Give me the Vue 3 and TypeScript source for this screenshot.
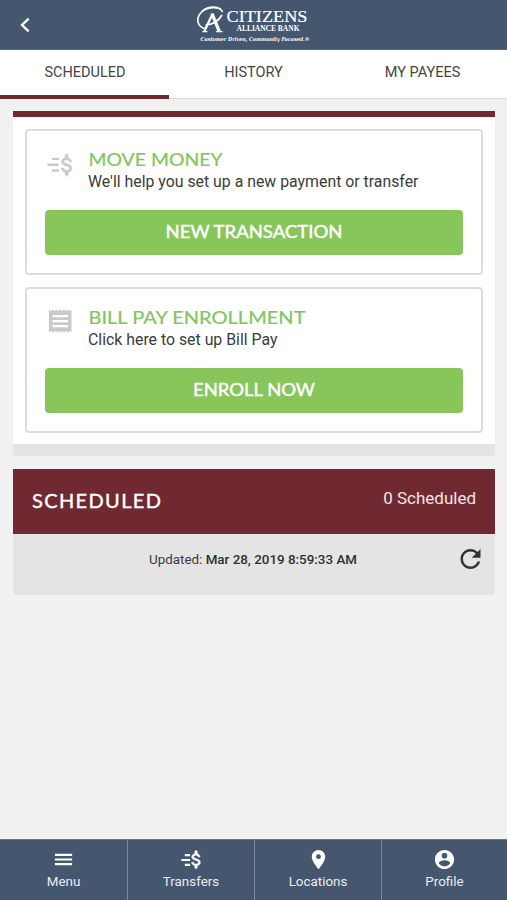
<script setup lang="ts">
interface ActionCard { icon: 'money' | 'receipt'; title: string; titleWidth: number; text: string; button: string; buttonWidth: number }

const tabs: string[] = ['SCHEDULED', 'HISTORY', 'MY PAYEES']
const navItems: string[] = ['Menu', 'Transfers', 'Locations', 'Profile']
const cards: ActionCard[] = [
  { icon: 'money', title: 'MOVE MONEY', titleWidth: 134, text: "We'll help you set up a new payment or transfer", button: 'NEW TRANSACTION', buttonWidth: 177 },
  { icon: 'receipt', title: 'BILL PAY ENROLLMENT', titleWidth: 217, text: 'Click here to set up Bill Pay', button: 'ENROLL NOW', buttonWidth: 122 },
]
const dollar = 'M11.8 10.9c-2.27-.59-3-1.2-3-2.15 0-1.09 1.01-1.85 2.7-1.85 1.78 0 2.44.85 2.5 2.1h2.21c-.07-1.72-1.12-3.3-3.21-3.81V3L11.5 1 10 3v2.16c-1.94.42-3.5 1.68-3.5 3.61 0 2.31 1.91 3.46 4.7 4.13 2.5.6 3 1.48 3 2.41 0 .69-.49 1.79-2.7 1.79-2.06 0-2.87-.92-2.98-2.1h-2.2c.12 2.19 1.76 3.42 3.68 3.83V21l1.5 2 1.5-2v-2.15c1.95-.37 3.5-1.5 3.5-3.55 0-2.84-2.43-3.81-4.7-4.4z'
</script>

<template>
  <div class="screen">
    <header class="topbar">
      <svg class="back" viewBox="0 0 12 16"><path d="M9.700 1.700 3 8l6.700 6.300" /></svg>
      <svg class="logo" viewBox="0 0 118 42">
        <g fill="none" stroke="#fff">
          <path d="M26.500 8C24 2 13 1.500 6.500 7-.5 13.500.5 22 8.500 24.500" stroke-width="1.700" />
          <path d="M2.300 13C5 6.500 14 1.800 25 5" stroke-width=".9" />
          <path d="M8.200 27.500 16.500 10" stroke-width="2.300" />
          <path d="M16 9.500 23.300 27.500" stroke-width="3.300" />
          <path d="M9.500 21c7.500-.5 13-4 16.500-10" stroke-width="1.700" />
          <path d="M6.500 27.600h5M20 27.600h6.500" stroke-width="1.100" />
        </g>
        <text class="logo-main" x="30.500" y="17.800" textLength="81" lengthAdjust="spacingAndGlyphs">CITIZENS</text>
        <text class="logo-sub" x="40.500" y="27.200" textLength="63" lengthAdjust="spacingAndGlyphs">ALLIANCE BANK</text>
        <text class="logo-tag" x="4.500" y="36.800" textLength="109" lengthAdjust="spacingAndGlyphs">Customer Driven, Community Focused.®</text>
      </svg>
    </header>

    <nav class="tabs">
      <div v-for="(tab, i) in tabs" :key="tab" class="tab" :class="{ active: i === 0 }">{{ tab }}</div>
    </nav>

    <main>
      <section class="actions">
        <article v-for="card in cards" :key="card.title" class="card">
          <div class="card-head">
            <svg v-if="card.icon === 'money'" class="card-icon" viewBox="0 0 30 30">
              <g class="bold" transform="translate(9.700 2.500) scale(1.040)"><path :d="dollar" /></g>
              <path d="M7 7.700h7v2.400H7zM2.500 13.500h11v2.400h-11zM7 19.300h7v2.400H7z" />
            </svg>
            <svg v-else class="card-icon receipt" viewBox="0 0 30 30">
              <path fill-rule="evenodd" d="M4 3.500 5.900 5 7.800 3.500 9.700 5l1.900-1.500L13.500 5l1.900-1.500L17.300 5l1.900-1.500L21.100 5 23 3.500 24.900 5 26.500 3.500v23L24.900 25 23 26.500 21.100 25l-1.900 1.500-1.900-1.500-1.900 1.500-1.900-1.500-1.900 1.500L9.700 25l-1.900 1.500L5.900 25 4 26.500zM7.500 9v2.200h15.500V9zm0 5v2.200h15.500V14zm0 5v2.200h15.500V19z" />
            </svg>
            <div class="card-copy">
              <svg class="card-title" viewBox="0 0 330 22">
                <text x=".5" y="17.500" :textLength="card.titleWidth" lengthAdjust="spacingAndGlyphs">{{ card.title }}</text>
              </svg>
              <p>{{ card.text }}</p>
            </div>
          </div>
          <button type="button">
            <svg class="button-label" viewBox="0 0 418 45">
              <text :x="209 - card.buttonWidth / 2" y="28" :textLength="card.buttonWidth" lengthAdjust="spacingAndGlyphs">{{ card.button }}</text>
            </svg>
          </button>
        </article>
      </section>

      <section class="scheduled">
        <div class="scheduled-head">
          <svg class="scheduled-title" viewBox="0 0 140 30">
            <text x="0" y="22.300" textLength="129" lengthAdjust="spacing">SCHEDULED</text>
          </svg>
          <span class="count">0 Scheduled</span>
        </div>
        <div class="updated">
          <p>Updated: <b>Mar 28, 2019 8:59:33 AM</b></p>
          <svg class="refresh" viewBox="4 4 16 16"><path d="M17.650 6.350C16.200 4.900 14.210 4 12 4c-4.420 0-7.990 3.580-7.990 8s3.570 8 7.990 8c3.730 0 6.840-2.550 7.730-6h-2.080c-.82 2.330-3.040 4-5.650 4-3.310 0-6-2.690-6-6s2.690-6 6-6c1.660 0 3.140.69 4.220 1.780L13 11h7V4z" /></svg>
        </div>
      </section>
    </main>

    <footer class="bottom-nav">
      <div v-for="item in navItems" :key="item" class="nav-item">
        <svg v-if="item === 'Menu'" viewBox="0 0 24 24"><path d="M3 18h18v-2.300H3zm0-4.850h18v-2.300H3zM3 6v2.300h18V6z" /></svg>
        <svg v-else-if="item === 'Transfers'" viewBox="0 0 24 24">
          <g class="bold" transform="translate(6.400 1.300) scale(.9)"><path :d="dollar" /></g>
          <path d="M5 6.300h5.500v2.200H5zM1.500 11.400h9v2.200h-9zM5 16.500h5.500v2.200H5z" />
        </svg>
        <svg v-else-if="item === 'Locations'" viewBox="0 0 24 24"><path d="M12 2C8.130 2 5 5.130 5 9c0 5.250 7 13 7 13s7-7.750 7-13c0-3.870-3.130-7-7-7zm0 9.500A2.500 2.500 0 1 1 12 6.500a2.500 2.500 0 0 1 0 5z" /></svg>
        <svg v-else viewBox="0 0 24 24"><path d="M12 2C6.480 2 2 6.480 2 12s4.480 10 10 10 10-4.480 10-10S17.520 2 12 2zm0 3c1.660 0 3 1.340 3 3s-1.340 3-3 3-3-1.340-3-3 1.340-3 3-3zm0 14.200c-2.500 0-4.710-1.280-6-3.220.03-1.990 4-3.080 6-3.080 1.990 0 5.970 1.090 6 3.080-1.290 1.940-3.500 3.220-6 3.220z" /></svg>
        <span>{{ item }}</span>
      </div>
    </footer>
  </div>
</template>

<style>
body { margin: 0; background: #f1f1f1; }
</style>

<style scoped>
* { box-sizing: border-box; }
p { margin: 0; }
.screen { height: 900px; display: flex; flex-direction: column; background: #f1f1f1; color: #3b3b3b; font-family: Roboto, sans-serif; overflow: hidden; }
.topbar { height: 50px; flex: none; display: flex; align-items: flex-start; background: #45566f; border-bottom: 1px solid #5c6a80; }
.back { width: 12px; height: 16px; margin: 17px 159px 0 19px; fill: none; stroke: #fff; stroke-width: 2.4; }
.logo { width: 118px; height: 42px; margin: 4px 0 0 6px; overflow: visible; }
.logo text { fill: #fff; font-family: "Liberation Serif", serif; }
.logo .logo-main { font-size: 17.500px; stroke: #fff; stroke-width: .2px; }
.logo .logo-sub { font-size: 8.200px; font-weight: 700; }
.logo .logo-tag { font-family: "DejaVu Serif", serif; font-style: italic; font-weight: 700; font-size: 5.400px; }
.tabs { height: 49px; flex: none; display: grid; grid-template-columns: repeat(3, 1fr); background: #fff; border-bottom: 1px solid #d9d9d9; }
.tab { height: 49px; padding-top: 13px; text-align: center; font-size: 14.500px; line-height: 20px; color: #444; }
.tab.active { border-bottom: 4px solid #702931; padding-left: 1px; }
main { flex: 1; padding: 12px 12px 0 13px; }
.actions { height: 345px; padding: 12px; border-top: 6px solid #702931; border-bottom: 12px solid #e4e4e4; background: #fff; border-radius: 0 0 4px 4px; display: flex; flex-direction: column; gap: 12px; }
.card { height: 146px; flex: none; padding: 18px; border: 2px solid #dcddde; border-radius: 4px; }
.card-head { height: 61px; display: flex; }
.card-icon { width: 30px; height: 30px; margin-top: 1px; fill: #cacaca; flex: none; }
.card-icon.receipt { margin-top: -1px; }
.bold { stroke: #cacaca; stroke-width: .6px; }
.nav-item .bold { stroke: #fff; }
.card-copy { margin-left: 13px; }
.card-title { display: block; width: 330px; height: 22px; margin-top: -1px; }
.card-title text { font: 400 17.500px Lato, sans-serif; fill: #82c65b; stroke: #82c65b; stroke-width: .2px; }
.card-copy p { font-size: 15.850px; line-height: 20px; white-space: nowrap; margin-top: 2px; }
button { display: block; width: 418px; height: 45px; padding: 0; border: 0; border-radius: 4px; background: #88c65c; }
.button-label { display: block; width: 418px; height: 45px; }
.button-label text { font: 400 16.500px Lato, sans-serif; fill: #fff; stroke: #fff; stroke-width: .4px; }
.scheduled { margin-top: 13px; height: 126px; background: #e4e4e4; border-radius: 0 0 4px 4px; }
.scheduled-head { height: 65px; padding: 0 19px; display: flex; justify-content: space-between; background: #702931; color: #fff; }
.scheduled-title { width: 140px; height: 30px; margin-top: 17px; }
.scheduled-title text { font: 400 20px Lato, sans-serif; fill: #fff; stroke: #fff; stroke-width: .4px; }
.count { padding-top: 18px; font-size: 17px; line-height: 22px; color: #f3e4e5; }
.updated { padding: 14px 14px 0 136px; display: flex; justify-content: space-between; }
.updated p { font-size: 13.400px; line-height: 24px; white-space: nowrap; }
.updated b { font-weight: 500; color: #303030; }
.refresh { width: 21px; height: 20px; margin-top: 1px; fill: #333; }
.bottom-nav { height: 61px; flex: none; display: grid; grid-template-columns: 128px 127px 127px 125px; background: #45566f; border-top: 1px solid #66758a; }
.nav-item { display: flex; flex-direction: column; align-items: center; border-right: 1px solid #7b899e; color: #e9edf3; }
.nav-item:last-child { border-right: 0; }
.nav-item svg { width: 23px; height: 23px; margin-top: 8px; fill: #fff; }
.nav-item span { font-size: 13.400px; line-height: 18px; margin-top: 2px; }
</style>
